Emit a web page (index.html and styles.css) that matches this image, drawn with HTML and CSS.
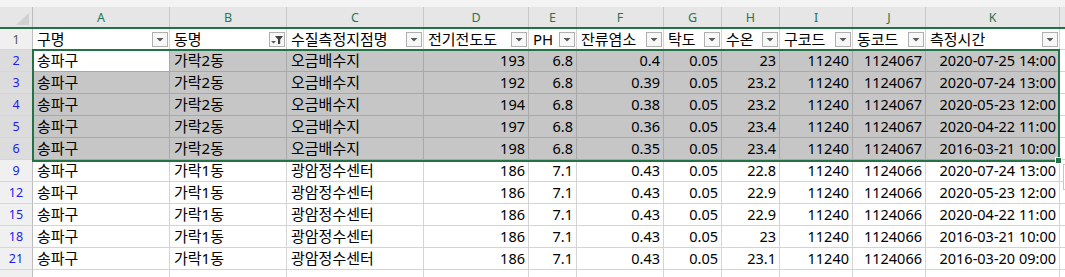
FILE: index.html
```html
<!DOCTYPE html>
<html lang="ko">
<head>
  <meta charset="UTF-8" />
  <title>수질측정 - 필터</title>
  <link rel="stylesheet" href="styles.css">
</head>
<body>
  <div class="sheet">
    <div class="strip"></div>

    <div class="row colhead">
      <div class="corner">
        <svg width="13" height="12" viewBox="0 0 13 12"><polygon points="13,0 13,12 0,12" fill="#d0d0d0"/></svg>
      </div>
      <div>A</div><div>B</div><div>C</div><div>D</div><div>E</div><div>F</div>
      <div>G</div><div>H</div><div>I</div><div>J</div><div>K</div><div class="plain"></div>
    </div>

    <div class="row hdr">
      <div class="rn first">1</div>
      <div class="cell"><span>구명</span><span class="dd"><svg width="14" height="13" viewBox="0 0 14 13"><polygon points="3.5,5 10.5,5 7,8.5" fill="#5a5a5a"/></svg></span></div>
      <div class="cell"><span>동명</span><span class="dd"><svg width="14" height="13" viewBox="0 0 14 13"><polygon points="1,8 6,8 3.5,10.5" fill="#5a5a5a"/><polygon points="5,3 13,3 10.2,6.5 10.2,11 8,11 8,6.5" fill="#404040"/></svg></span></div>
      <div class="cell"><span>수질측정지점명</span><span class="dd"><svg width="14" height="13" viewBox="0 0 14 13"><polygon points="3.5,5 10.5,5 7,8.5" fill="#5a5a5a"/></svg></span></div>
      <div class="cell"><span>전기전도도</span><span class="dd"><svg width="14" height="13" viewBox="0 0 14 13"><polygon points="3.5,5 10.5,5 7,8.5" fill="#5a5a5a"/></svg></span></div>
      <div class="cell"><span>PH</span><span class="dd"><svg width="14" height="13" viewBox="0 0 14 13"><polygon points="3.5,5 10.5,5 7,8.5" fill="#5a5a5a"/></svg></span></div>
      <div class="cell"><span>잔류염소</span><span class="dd"><svg width="14" height="13" viewBox="0 0 14 13"><polygon points="3.5,5 10.5,5 7,8.5" fill="#5a5a5a"/></svg></span></div>
      <div class="cell"><span>탁도</span><span class="dd"><svg width="14" height="13" viewBox="0 0 14 13"><polygon points="3.5,5 10.5,5 7,8.5" fill="#5a5a5a"/></svg></span></div>
      <div class="cell"><span>수온</span><span class="dd"><svg width="14" height="13" viewBox="0 0 14 13"><polygon points="3.5,5 10.5,5 7,8.5" fill="#5a5a5a"/></svg></span></div>
      <div class="cell"><span>구코드</span><span class="dd"><svg width="14" height="13" viewBox="0 0 14 13"><polygon points="3.5,5 10.5,5 7,8.5" fill="#5a5a5a"/></svg></span></div>
      <div class="cell"><span>동코드</span><span class="dd"><svg width="14" height="13" viewBox="0 0 14 13"><polygon points="3.5,5 10.5,5 7,8.5" fill="#5a5a5a"/></svg></span></div>
      <div class="cell"><span>측정시간</span><span class="dd"><svg width="14" height="13" viewBox="0 0 14 13"><polygon points="3.5,5 10.5,5 7,8.5" fill="#5a5a5a"/></svg></span></div>
      <div class="cell"></div>
    </div>

    <!-- selected rows -->
    <div class="row sel">
      <div class="rn">2</div>
      <div class="cell active">송파구</div><div class="cell">가락2동</div><div class="cell">오금배수지</div>
      <div class="cell num">193</div><div class="cell num">6.8</div><div class="cell num">0.4</div><div class="cell num">0.05</div>
      <div class="cell num">23</div><div class="cell num">11240</div><div class="cell num">1124067</div><div class="cell num">2020-07-25 14:00</div>
      <div class="cell out"></div>
    </div>
    <div class="row sel">
      <div class="rn">3</div>
      <div class="cell">송파구</div><div class="cell">가락2동</div><div class="cell">오금배수지</div>
      <div class="cell num">192</div><div class="cell num">6.8</div><div class="cell num">0.39</div><div class="cell num">0.05</div>
      <div class="cell num">23.2</div><div class="cell num">11240</div><div class="cell num">1124067</div><div class="cell num">2020-07-24 13:00</div>
      <div class="cell out"></div>
    </div>
    <div class="row sel">
      <div class="rn">4</div>
      <div class="cell">송파구</div><div class="cell">가락2동</div><div class="cell">오금배수지</div>
      <div class="cell num">194</div><div class="cell num">6.8</div><div class="cell num">0.38</div><div class="cell num">0.05</div>
      <div class="cell num">23.2</div><div class="cell num">11240</div><div class="cell num">1124067</div><div class="cell num">2020-05-23 12:00</div>
      <div class="cell out"></div>
    </div>
    <div class="row sel">
      <div class="rn">5</div>
      <div class="cell">송파구</div><div class="cell">가락2동</div><div class="cell">오금배수지</div>
      <div class="cell num">197</div><div class="cell num">6.8</div><div class="cell num">0.36</div><div class="cell num">0.05</div>
      <div class="cell num">23.4</div><div class="cell num">11240</div><div class="cell num">1124067</div><div class="cell num">2020-04-22 11:00</div>
      <div class="cell out"></div>
    </div>
    <div class="row sel">
      <div class="rn">6</div>
      <div class="cell">송파구</div><div class="cell">가락2동</div><div class="cell">오금배수지</div>
      <div class="cell num">198</div><div class="cell num">6.8</div><div class="cell num">0.35</div><div class="cell num">0.05</div>
      <div class="cell num">23.4</div><div class="cell num">11240</div><div class="cell num">1124067</div><div class="cell num">2016-03-21 10:00</div>
      <div class="cell out"></div>
    </div>

    <div class="row">
      <div class="rn">9</div>
      <div class="cell">송파구</div><div class="cell">가락1동</div><div class="cell">광암정수센터</div>
      <div class="cell num">186</div><div class="cell num">7.1</div><div class="cell num">0.43</div><div class="cell num">0.05</div>
      <div class="cell num">22.8</div><div class="cell num">11240</div><div class="cell num">1124066</div><div class="cell num">2020-07-24 13:00</div>
      <div class="cell"></div>
    </div>
    <div class="row">
      <div class="rn">12</div>
      <div class="cell">송파구</div><div class="cell">가락1동</div><div class="cell">광암정수센터</div>
      <div class="cell num">186</div><div class="cell num">7.1</div><div class="cell num">0.43</div><div class="cell num">0.05</div>
      <div class="cell num">22.9</div><div class="cell num">11240</div><div class="cell num">1124066</div><div class="cell num">2020-05-23 12:00</div>
      <div class="cell"></div>
    </div>
    <div class="row">
      <div class="rn">15</div>
      <div class="cell">송파구</div><div class="cell">가락1동</div><div class="cell">광암정수센터</div>
      <div class="cell num">186</div><div class="cell num">7.1</div><div class="cell num">0.43</div><div class="cell num">0.05</div>
      <div class="cell num">22.9</div><div class="cell num">11240</div><div class="cell num">1124066</div><div class="cell num">2020-04-22 11:00</div>
      <div class="cell"></div>
    </div>
    <div class="row">
      <div class="rn">18</div>
      <div class="cell">송파구</div><div class="cell">가락1동</div><div class="cell">광암정수센터</div>
      <div class="cell num">186</div><div class="cell num">7.1</div><div class="cell num">0.43</div><div class="cell num">0.05</div>
      <div class="cell num">23</div><div class="cell num">11240</div><div class="cell num">1124066</div><div class="cell num">2016-03-21 10:00</div>
      <div class="cell"></div>
    </div>
    <div class="row">
      <div class="rn">21</div>
      <div class="cell">송파구</div><div class="cell">가락1동</div><div class="cell">광암정수센터</div>
      <div class="cell num">186</div><div class="cell num">7.1</div><div class="cell num">0.43</div><div class="cell num">0.05</div>
      <div class="cell num">23.1</div><div class="cell num">11240</div><div class="cell num">1124066</div><div class="cell num">2016-03-20 09:00</div>
      <div class="cell"></div>
    </div>
    <div class="row">
      <div class="rn"></div>
      <div class="cell"></div><div class="cell"></div><div class="cell"></div><div class="cell"></div><div class="cell"></div><div class="cell"></div>
      <div class="cell"></div><div class="cell"></div><div class="cell"></div><div class="cell"></div><div class="cell"></div><div class="cell"></div>
    </div>

    <!-- selection outline A2:K6 -->
    <div class="selbox"></div>
    <div class="handle"></div>
    <div class="quick"></div>
  </div>
</body>
</html>
```

FILE: styles.css
```css
body {
  margin: 0;
  background-color: #ffffff;
  font-family: "Noto Sans", "Noto Sans CJK KR", sans-serif;
  overflow: hidden;
}

.sheet {
  position: relative;
  width: 1065px;
  height: 277px;
  overflow: hidden;
}

.strip {
  height: 7px;
  background-color: #f3f3f3;
}

.row {
  display: grid;
  grid-template-columns: 33px 137px 117px 137px 105px 48px 87px 58px 58px 73px 73px 134px 1fr;
  height: 22px;
}

.row > div {
  box-sizing: border-box;
  height: 100%;
}

/* column letters */
.colhead {
  height: 22px;
  background-color: #e6e6e6;
  border-bottom: 2px solid #217346;
  box-sizing: border-box;
}

.colhead > div {
  display: flex;
  align-items: center;
  justify-content: center;
  border-right: 1px solid #c8c8c8;
  color: #2a7550;
  font-family: "Noto Sans", sans-serif;
  font-size: 12.5px;
}

.colhead .corner {
  align-items: flex-end;
  justify-content: flex-end;
  padding: 0 3px 2px 0;
  border-right: 1px solid #bdbdbd;
}

.colhead .plain {
  border-right: none;
}

/* row numbers */
.rn {
  display: flex;
  align-items: center;
  justify-content: center;
  background-color: #f0f0f0;
  border-right: 1px solid #bdbdbd;
  border-bottom: 1px solid #d6d6d6;
  color: #1c1cf0;
  font-size: 12.5px;
}

.rn.first {
  color: #555555;
}

.sel .rn {
  background-color: #dcdcdc;
}

/* cells */
.cell {
  display: flex;
  align-items: center;
  padding: 0 3px 0 4px;
  border-right: 1px solid #d4d4d4;
  border-bottom: 1px solid #d4d4d4;
  color: #000000;
  font-size: 15px;
  line-height: 1;
  white-space: nowrap;
  overflow: hidden;
}

.cell.num {
  justify-content: flex-end;
  font-size: 14.5px;
}

.hdr {
  height: 21px;
}

.hdr .cell {
  justify-content: space-between;
  padding-right: 1px;
}

.dd {
  display: flex;
  align-items: center;
  justify-content: center;
  width: 16px;
  height: 15px;
  box-sizing: border-box;
  border: 1px solid #b0b0b0;
  background-color: #f7f7f7;
}

.sel .cell {
  background-color: #c6c6c6;
  border-color: #a9a9a9;
}

.sel .cell.active {
  background-color: #ffffff;
}

.sel .cell.out {
  background-color: #ffffff;
  border-color: #d4d4d4;
}

.selbox {
  position: absolute;
  left: 32px;
  top: 49px;
  width: 1028px;
  height: 113px;
  box-sizing: border-box;
  border: 2px solid #217346;
}

.handle {
  position: absolute;
  left: 1055px;
  top: 157px;
  width: 7px;
  height: 7px;
  box-sizing: border-box;
  background-color: #217346;
  border: 1px solid #ffffff;
}

.quick {
  position: absolute;
  left: 1063px;
  top: 164px;
  width: 22px;
  height: 26px;
  box-sizing: border-box;
  border: 1px solid #c6c6c6;
  background-color: #ffffff;
}
```
